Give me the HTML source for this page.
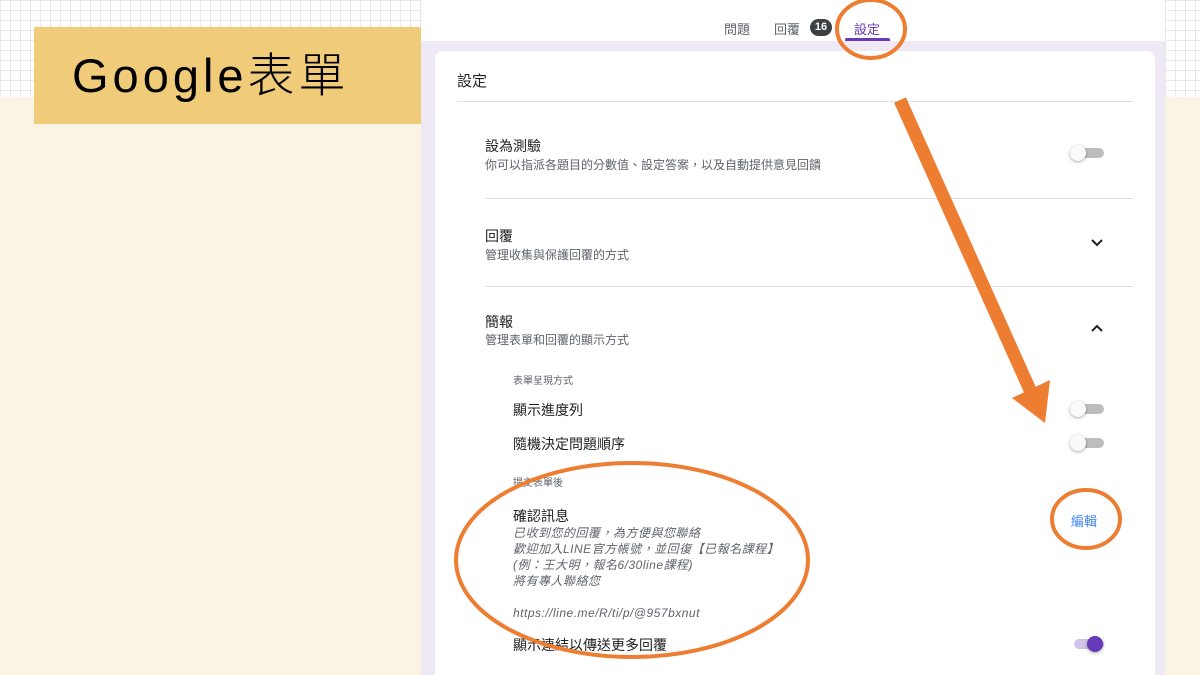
<!DOCTYPE html>
<html><head><meta charset="utf-8"><style>
*{margin:0;padding:0;box-sizing:border-box}
body{width:1200px;height:675px;position:relative;overflow:hidden;background:#fbf3e3;font-family:"Liberation Sans","Noto Sans CJK TC",sans-serif;color:#202124}
.grid{position:absolute;top:0;height:97px;background-color:#fff;background-image:linear-gradient(#e6e8f0 1px,transparent 1px),linear-gradient(90deg,#e6e8f0 1px,transparent 1px);background-size:10px 10px}
.a{position:absolute;white-space:nowrap}
.t{font-size:14px;color:#202124}
.s{font-size:12px;color:#5f6368}
.hr{position:absolute;height:1px;background:#e0e0e0}
.tg{position:absolute;width:34px;height:14px}
.tg .tr{position:absolute;left:4px;top:2px;width:30px;height:10px;border-radius:5px;background:#bdbdbd}
.tg .th{position:absolute;left:0;top:-1px;width:16px;height:16px;border-radius:50%;background:#fafafa;box-shadow:0 1px 3px rgba(0,0,0,.35)}
</style></head><body>
<div class="grid" style="left:0;width:421px"></div>
<div class="grid" style="left:1165px;width:35px"></div>
<div class="a" style="left:34px;top:27px;width:387px;height:97px;background:#f0cc7a"></div>
<div class="a" style="left:72px;top:46px;font-size:47px;color:#000;line-height:60px;letter-spacing:4px;font-weight:300">Google表單</div>

<div class="a" style="left:421px;top:0;width:744px;height:675px;background:#efe9f6"></div>
<div class="a" style="left:421px;top:0;width:744px;height:41px;background:#fff"></div>
<div class="a" style="left:724px;top:19px;font-size:13px;color:#5f6368">問題</div>
<div class="a" style="left:774px;top:19px;font-size:13px;color:#5f6368">回覆</div>
<div class="a" style="left:810px;top:19px;width:22px;height:17px;border-radius:9px;background:#3c4043;color:#fff;font-size:11px;font-weight:bold;text-align:center;line-height:17px">16</div>
<div class="a" style="left:854px;top:19px;font-size:13px;color:#673ab7">設定</div>
<div class="a" style="left:845px;top:38px;width:45px;height:3px;background:#673ab7;border-radius:2px 2px 0 0"></div>

<div class="a" style="left:435px;top:51px;width:720px;height:624px;background:#fff;border-radius:8px 8px 0 0"></div>
<div class="a" style="left:457px;top:70px;font-size:15px">設定</div>
<div class="hr" style="left:457px;top:101px;width:676px"></div>

<div class="a t" style="left:485px;top:136px">設為測驗</div>
<div class="a s" style="left:485px;top:156px">你可以指派各題目的分數值、設定答案，以及自動提供意見回饋</div>
<div class="tg" style="left:1070px;top:146px"><div class="tr"></div><div class="th"></div></div>
<div class="hr" style="left:485px;top:198px;width:648px"></div>

<div class="a t" style="left:485px;top:226px">回覆</div>
<div class="a s" style="left:485px;top:246px">管理收集與保護回覆的方式</div>
<svg class="a" style="left:1090px;top:238px" width="14" height="10"><path d="M2 2 L7 7 L12 2" stroke="#202124" stroke-width="2" fill="none"/></svg>
<div class="hr" style="left:485px;top:286px;width:648px"></div>

<div class="a t" style="left:485px;top:312px">簡報</div>
<div class="a s" style="left:485px;top:331px">管理表單和回覆的顯示方式</div>
<svg class="a" style="left:1090px;top:323px" width="14" height="10"><path d="M2 8 L7 3 L12 8" stroke="#202124" stroke-width="2" fill="none"/></svg>

<div class="a" style="left:513px;top:372px;font-size:10px;color:#5f6368">表單呈現方式</div>
<div class="a t" style="left:513px;top:400px">顯示進度列</div>
<div class="tg" style="left:1070px;top:402px"><div class="tr"></div><div class="th"></div></div>
<div class="a t" style="left:513px;top:434px">隨機決定問題順序</div>
<div class="tg" style="left:1070px;top:436px"><div class="tr"></div><div class="th"></div></div>

<div class="a" style="left:513px;top:474px;font-size:10px;color:#5f6368">提交表單後</div>
<div class="a t" style="left:513px;top:506px">確認訊息</div>
<div class="a" style="left:513px;top:525px;font-size:12px;color:#5f6368;font-style:italic;line-height:16px;letter-spacing:.5px">已收到您的回覆，為方便與您聯絡<br>歡迎加入LINE官方帳號，並回復【已報名課程】<br>(例：王大明，報名6/30line課程)<br>將有專人聯絡您<br><br>https://line.me/R/ti/p/@957bxnut</div>
<div class="a" style="left:1071px;top:511px;font-size:13px;color:#4285f4">編輯</div>
<div class="a t" style="left:513px;top:635px">顯示連結以傳送更多回覆</div>
<div class="tg" style="left:1070px;top:637px"><div class="tr" style="background:#d1c4e9"></div><div class="th" style="left:17px;background:#673ab7"></div></div>

<svg class="a" style="left:0;top:0" width="1200" height="675">
<g fill="none" stroke="#ed7d31" stroke-width="4">
<ellipse cx="871" cy="29" rx="34" ry="29"/>
<ellipse cx="1086" cy="519" rx="34" ry="29"/>
<ellipse cx="632" cy="560" rx="176" ry="97"/>
</g>
<line x1="900" y1="100" x2="1030" y2="390" stroke="#ed7d31" stroke-width="13"/>
<polygon points="1012,398 1050,380 1045,423" fill="#ed7d31"/>
</svg>
</body></html>
